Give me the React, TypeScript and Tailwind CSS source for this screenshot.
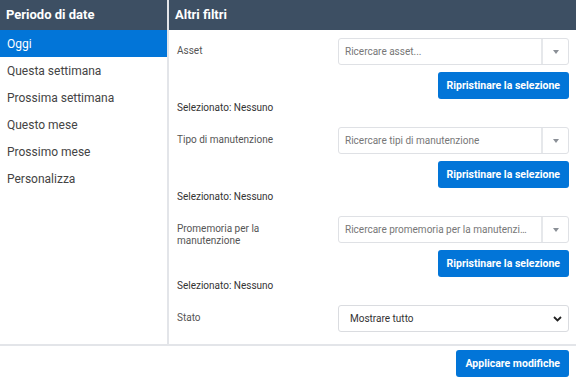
import React from "react";

const periods = ["Oggi", "Questa settimana", "Prossima settimana", "Questo mese", "Prossimo mese", "Personalizza"];

function Caret() {
  return (
    <svg width="6" height="4" viewBox="0 0 6 4">
      <path d="M0 0h6L3 4z" fill="#8a8f96" />
    </svg>
  );
}

function SearchBox({ placeholder }: { placeholder: string }) {
  return (
    <div className="flex h-[27px] w-full min-w-0 rounded-[3px] border border-[#dfe1e5] bg-white">
      <div className="flex min-w-0 flex-1 items-center pl-[6px] pr-[8px] text-[10px] text-[#777]">
        <span className="whitespace-nowrap">{placeholder}</span>
      </div>
      <div className="flex w-[27px] shrink-0 items-center justify-center border-l-2 border-[#e6e8eb]">
        <Caret />
      </div>
    </div>
  );
}

function FilterBlock({ label, placeholder }: { label: string; placeholder: string }) {
  return (
    <div className="mb-[12px]">
      <div className="grid grid-cols-[161px_minmax(0,1fr)]">
        <div className="h-[27px] pr-[30px] pt-[7px] text-[10px] leading-[12px] text-[#555]">{label}</div>
        <SearchBox placeholder={placeholder} />
        <div />
        <div className="mt-[7px] flex justify-end">
          <button className="h-[27px] rounded-[3px] bg-[#0275d8] px-[9px] text-[10.5px] font-bold text-white">
            Ripristinare la selezione
          </button>
        </div>
      </div>
      <div className="h-[16px] pt-[2px] text-[10px] leading-[14px] text-[#333]">Selezionato: Nessuno</div>
    </div>
  );
}

export default function App() {
  return (
    <div className="flex h-[382px] w-[576px] flex-col bg-white font-['Roboto',sans-serif]">
      <div className="flex h-[344px]">
        <div className="w-[169px] shrink-0 border-r-2 border-[#e3e5e9]">
          <div className="flex h-[30px] items-center bg-[#3d4f63] px-[6px] text-[13px] font-bold text-white">
            Periodo di date
          </div>
          {periods.map((p, i) => (
            <div
              key={p}
              className={
                i === 0
                  ? "flex h-[27px] items-center bg-[#0275d8] px-[7px] text-[12px] text-white"
                  : "flex h-[27px] items-center px-[7px] text-[12px] text-[#444]"
              }
            >
              {p}
            </div>
          ))}
        </div>
        <div className="min-w-0 flex-1">
          <div className="flex h-[30px] items-center bg-[#3d4f63] px-[6px] text-[13px] font-bold text-white">
            Altri filtri
          </div>
          <div className="pl-[8px] pr-[7px] pt-[8px]">
            <FilterBlock label="Asset" placeholder="Ricercare asset..." />
            <FilterBlock label="Tipo di manutenzione" placeholder="Ricercare tipi di manutenzione" />
            <FilterBlock label="Promemoria per la manutenzione" placeholder="Ricercare promemoria per la manutenzi…" />
            <div className="grid grid-cols-[161px_minmax(0,1fr)]">
              <div className="h-[27px] pt-[7px] text-[10px] leading-[12px] text-[#555]">Stato</div>
              <div className="flex h-[27px] items-center justify-between rounded-[3px] border border-[#dadce0] pl-[11px] pr-[6px] text-[10px] text-[#333]">
                <span>Mostrare tutto</span>
                <svg width="9" height="6" viewBox="0 0 9 6">
                  <path d="M1 1l3.5 3.5L8 1" fill="none" stroke="#222" strokeWidth="1.8" />
                </svg>
              </div>
            </div>
          </div>
        </div>
      </div>
      <div className="flex flex-1 justify-end border-t-2 border-[#e3e5e9] pr-[7px] pt-[4px]">
        <button className="h-[27px] rounded-[3px] bg-[#0275d8] px-[9px] text-[10.5px] font-bold text-white">
          Applicare modifiche
        </button>
      </div>
    </div>
  );
}
